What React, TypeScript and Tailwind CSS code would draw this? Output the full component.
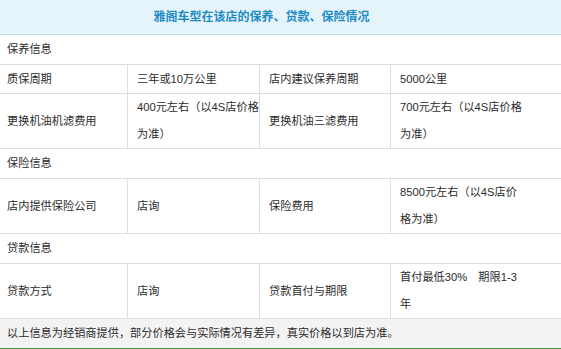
const rows = [
  {
    section: "保养信息",
    items: [
      ["质保周期", "三年或10万公里", "店内建议保养周期", "5000公里"],
      ["更换机油机滤费用", "400元左右（以4S店价格\n为准）", "更换机油三滤费用", "700元左右（以4S店价格\n为准）"],
    ],
  },
  {
    section: "保险信息",
    items: [["店内提供保险公司", "店询", "保险费用", "8500元左右（以4S店价\n格为准）"]],
  },
  {
    section: "贷款信息",
    items: [["贷款方式", "店询", "贷款首付与期限", "首付最低30%　期限1-3\n年"]],
  },
];

const Cell = ({ text, first, last }: { text: string; first?: boolean; last?: boolean }) => (
  <div
    className={`flex min-h-[29px] flex-col justify-center whitespace-nowrap border-b border-[#dedede] leading-[27px] ${
      first ? "pl-[7px]" : "pl-[9px]"
    } ${last ? "" : "border-r"}`}
  >
    {text.split("\n").map((line) => (
      <span key={line}>{line}</span>
    ))}
  </div>
);

export default function App() {
  return (
    <div
      className="flex h-[349px] w-[561px] flex-col bg-white text-[11.2px] text-[#2b2b2b]"
      style={{ fontFamily: '"Liberation Sans", "Noto Sans CJK SC", sans-serif' }}
    >
      {/* Title */}
      <div className="flex h-[35px] items-center justify-center border-b border-[#c6dbe6] bg-[#e5f3fb] pr-[38px] text-[12px] font-bold text-[#1d8cc4]">
        雅阁车型在该店的保养、贷款、保险情况
      </div>

      <div className="grid grid-cols-[128px_132px_131px_1fr]">
        {rows.map((group) => (
          <div key={group.section} className="contents">
            <div className="col-span-4 flex h-[30px] items-center border-b border-[#dedede] pl-[7px]">
              {group.section}
            </div>
            {group.items.map((r) =>
              r.map((t, i) => <Cell key={r[0] + i} text={t} first={i === 0} last={i === 3} />)
            )}
          </div>
        ))}
      </div>

      {/* Footer note */}
      <div className="flex flex-1 items-center border-b border-[#3a9a30] bg-[#f3f3f3] pl-[7px]">
        以上信息为经销商提供，部分价格会与实际情况有差异，真实价格以到店为准。
      </div>
    </div>
  );
}
